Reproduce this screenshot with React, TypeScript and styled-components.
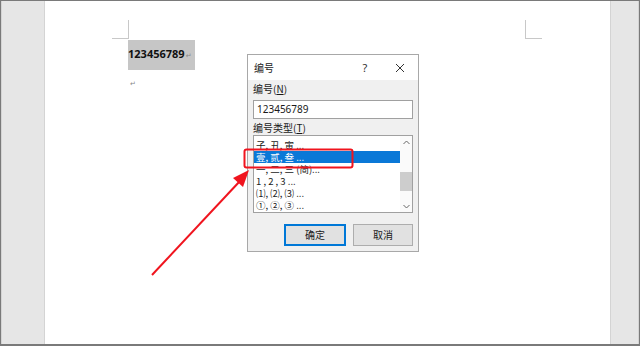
import styled, { createGlobalStyle } from "styled-components";

const GlobalStyle = createGlobalStyle`
  html, body {
    margin: 0;
    padding: 0;
    width: 640px;
    height: 346px;
    overflow: hidden;
    background: #ffffff;
    font-family: "Noto Sans CJK SC", "Noto Sans", sans-serif;
  }
`;

const Frame = styled.div`
  position: relative;
  width: 640px;
  height: 346px;
  box-sizing: border-box;
  border: 1px solid #7a7a7a;
  border-bottom-width: 2px;
  display: flex;
  overflow: hidden;
`;

const Gutter = styled.div<{ $w: number }>`
  width: ${(p) => p.$w}px;
  flex: none;
  background: #e6e6e6;
  border-left: 1px solid #d4d4d4;
  border-right: 1px solid #d4d4d4;
`;

const Page = styled.div`
  position: relative;
  flex: 1;
  background: #ffffff;
  padding: 39px 0 0 83px;
  display: flex;
  flex-direction: column;
  align-items: flex-start;
`;

const CropMark = styled.div<{ $x: number; $y: number; $flip?: boolean }>`
  position: absolute;
  left: ${(p) => p.$x}px;
  top: ${(p) => p.$y}px;
  width: 16px;
  height: 18px;
  border-color: #c8c8c8;
  border-style: solid;
  border-width: ${(p) => (p.$flip ? "0 0 1px 1px" : "0 1px 1px 0")};
`;

const Highlight = styled.div`
  background: #c6c6c6;
  padding: 5px 3px 6px 0;
  display: flex;
  align-items: baseline;
  font-family: "Noto Sans", "DejaVu Sans", sans-serif;
  font-weight: 700;
  font-size: 11px;
  line-height: 17px;
  color: #111;
`;

const ReturnMark = styled.span`
  font-size: 7px;
  color: #888;
  margin-left: 1px;
  font-weight: 400;
`;

const EmptyLine = styled.div`
  margin-top: 7px;
  margin-left: 2px;
  font-size: 7px;
  color: #888;
  line-height: 12px;
`;

const Dialog = styled.div`
  position: absolute;
  left: 246px;
  top: 53px;
  width: 172px;
  height: 198px;
  box-sizing: border-box;
  border: 1px solid #a8a8a8;
  background: #f0f0f0;
  display: flex;
  flex-direction: column;
  font-size: 10px;
  color: #1a1a1a;
`;

const TitleBar = styled.div`
  height: 25px;
  background: #ffffff;
  display: flex;
  align-items: center;
  padding: 0 0 0 6px;
`;

const Title = styled.span`
  flex: 1;
  font-size: 10px;
  line-height: 14px;
`;

const TitleButton = styled.span<{ $w: number }>`
  width: ${(p) => p.$w}px;
  display: flex;
  justify-content: center;
  font-family: "Noto Sans", sans-serif;
  font-size: 11px;
  line-height: 14px;
  color: #333;
`;

const Body = styled.div`
  display: flex;
  flex-direction: column;
  padding: 2px 5px 0 5px;
`;

const Label = styled.div<{ $gap?: number }>`
  height: 14px;
  line-height: 14px;
  margin-top: ${(p) => p.$gap ?? 0}px;
  font-size: 10px;

  u {
    text-underline-offset: 1px;
  }
`;

const Input = styled.div`
  margin-top: 4px;
  height: 19px;
  box-sizing: border-box;
  border: 1px solid #a0a0a0;
  background: #fff;
  padding: 0 3px;
  line-height: 17px;
  font-family: "Noto Sans", sans-serif;
  font-size: 10px;
`;

const ListBox = styled.div`
  height: 78px;
  box-sizing: border-box;
  border: 1px solid #a0a0a0;
  background: #fff;
  display: flex;
`;

const Items = styled.div`
  flex: 1;
  padding-top: 3px;
  display: flex;
  flex-direction: column;
`;

const Item = styled.div<{ $selected?: boolean }>`
  height: 12px;
  line-height: 12px;
  padding-left: 2px;
  font-size: 9.5px;
  white-space: nowrap;
  overflow: hidden;
  background: ${(p) => (p.$selected ? "#0a78d7" : "transparent")};
  color: ${(p) => (p.$selected ? "#ffffff" : "#1a1a1a")};
`;

const Scrollbar = styled.div`
  width: 12px;
  display: flex;
  flex-direction: column;
  align-items: center;
  background: #fafafa;
`;

const Arrow = styled.div`
  height: 12px;
  display: flex;
  align-items: center;
  justify-content: center;
`;

const Track = styled.div`
  flex: 1;
  width: 100%;
  padding-top: 24px;
`;

const Thumb = styled.div`
  width: 100%;
  height: 19px;
  background: #cdcdcd;
`;

const Buttons = styled.div`
  display: flex;
  justify-content: flex-end;
  gap: 7px;
  margin-top: 11px;
`;

const Button = styled.div<{ $primary?: boolean }>`
  width: ${(p) => (p.$primary ? 62 : 60)}px;
  height: 22px;
  box-sizing: border-box;
  border: 1px solid ${(p) => (p.$primary ? "#0078d7" : "#adadad")};
  box-shadow: ${(p) => (p.$primary ? "inset 0 0 0 1px #0078d7" : "none")};
  background: #e1e1e1;
  display: flex;
  align-items: center;
  justify-content: center;
  font-size: 10px;
  line-height: 14px;
`;

const Annotation = styled.svg`
  position: absolute;
  left: -1px;
  top: -1px;
  pointer-events: none;
`;

const items = [
  "子, 丑, 寅 ...",
  "壹, 贰, 叁 ...",
  "一, 二, 三 (简)...",
  "1 , 2 , 3 ...",
  "⑴, ⑵, ⑶ ...",
  "①, ②, ③ ...",
];

export default function App() {
  return (
    <>
      <GlobalStyle />
      <Frame>
        <Gutter $w={42} />
        <Page>
          <CropMark $x={67} $y={19} />
          <CropMark $x={480} $y={19} $flip />
          <Highlight>
            123456789<ReturnMark>↵</ReturnMark>
          </Highlight>
          <EmptyLine>↵</EmptyLine>
        </Page>
        <Gutter $w={27} />

        <Dialog>
          <TitleBar>
            <Title>编号</Title>
            <TitleButton $w={34}>?</TitleButton>
            <TitleButton $w={36}>
              <svg width="10" height="10" viewBox="0 0 10 10">
                <path d="M1 1 L9 9 M9 1 L1 9" stroke="#333" strokeWidth="1" />
              </svg>
            </TitleButton>
          </TitleBar>
          <Body>
            <Label>
              编号(<u>N</u>)
            </Label>
            <Input>123456789</Input>
            <Label $gap={2}>
              编号类型(<u>T</u>)
            </Label>
            <ListBox>
              <Items>
                {items.map((t, i) => (
                  <Item key={t} $selected={i === 1}>
                    {t}
                  </Item>
                ))}
              </Items>
              <Scrollbar>
                <Arrow>
                  <svg width="7" height="5" viewBox="0 0 7 5">
                    <path d="M0.5 4 L3.5 1 L6.5 4" fill="none" stroke="#666" />
                  </svg>
                </Arrow>
                <Track>
                  <Thumb />
                </Track>
                <Arrow>
                  <svg width="7" height="5" viewBox="0 0 7 5">
                    <path d="M0.5 1 L3.5 4 L6.5 1" fill="none" stroke="#666" />
                  </svg>
                </Arrow>
              </Scrollbar>
            </ListBox>
            <Buttons>
              <Button $primary>确定</Button>
              <Button>取消</Button>
            </Buttons>
          </Body>
        </Dialog>

        <Annotation width="640" height="346" viewBox="0 0 640 346">
          <rect
            x="244.5"
            y="149.5"
            width="108"
            height="18"
            rx="2"
            fill="none"
            stroke="#f0141e"
            strokeWidth="2"
          />
          <line x1="152" y1="275" x2="240" y2="181" stroke="#f0141e" strokeWidth="2" />
          <polygon points="249,170 233,178 243,187" fill="#f0141e" />
        </Annotation>
      </Frame>
    </>
  );
}
